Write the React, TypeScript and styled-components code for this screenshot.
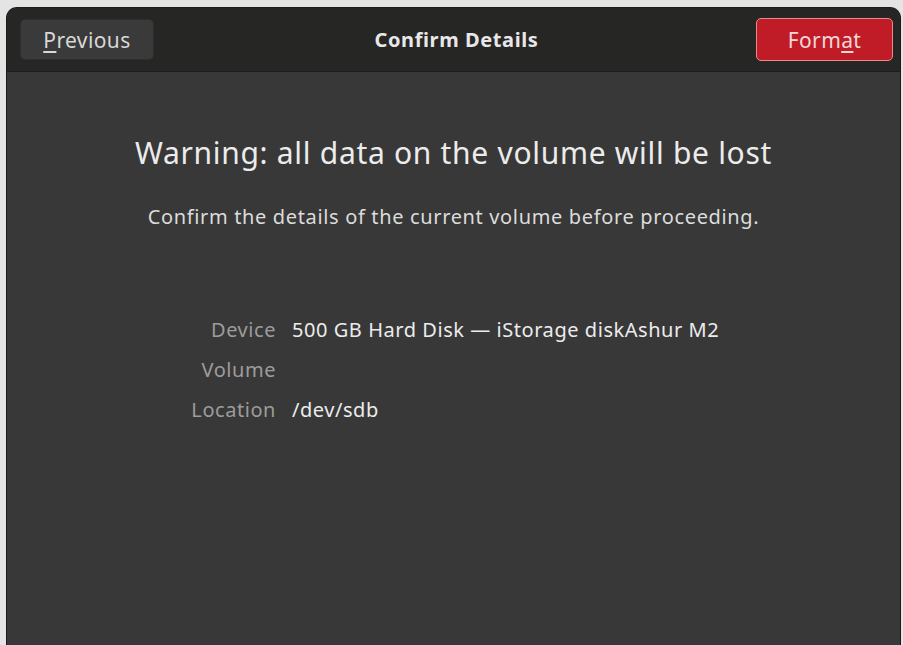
import React from 'react';
import styled, { createGlobalStyle } from 'styled-components';

const GlobalStyle = createGlobalStyle`
  html, body {
    margin: 0;
    padding: 0;
    background: #e4e4e4;
    height: 100%;
    overflow: hidden;
  }
  #root {
    height: 100%;
  }
`;

const Page = styled.div`
  height: 100%;
  padding: 8px 3px 0 7px;
  box-sizing: border-box;
  display: flex;
`;

const Window = styled.div`
  flex: 1;
  display: flex;
  flex-direction: column;
  background: #383838;
  border-radius: 10px 10px 0 0;
  overflow: hidden;
  box-shadow: 0 0 0 1px #1c1c1c;
  font-family: "Noto Sans", "Open Sans", sans-serif;
`;

const HeaderBar = styled.header`
  height: 63px;
  flex: none;
  background: #262625;
  border-bottom: 1px solid #1e1e1e;
  display: grid;
  grid-template-columns: 1fr auto 1fr;
  align-items: center;
  padding: 0 7px 0 13px;
`;

const Button = styled.button<{ $danger?: boolean }>`
  height: ${p => (p.$danger ? 43 : 41)}px;
  padding: 0 ${p => (p.$danger ? 24 : 22)}px;
  border-radius: 5px;
  border: ${p => (p.$danger ? '1.5px solid #e88a90' : '1px solid #2e2e2e')};
  background: ${p => (p.$danger ? '#c01c28' : '#3a3a3a')};
  color: ${p => (p.$danger ? '#f6d6d8' : '#d8d8d8')};
  font-family: inherit;
  font-size: 21px;
  letter-spacing: 0.4px;
  cursor: pointer;
  justify-self: ${p => (p.$danger ? 'end' : 'start')};
  min-width: ${p => (p.$danger ? 137 : 134)}px;
  text-align: center;
`;

const Mnemonic = styled.span`
  text-decoration: underline;
  text-underline-offset: 3px;
`;

const Title = styled.h1`
  margin: 0;
  font-size: 20px;
  font-weight: 700;
  color: #e8e8e8;
  letter-spacing: 0.6px;
`;

const Body = styled.main`
  flex: 1;
  display: flex;
  flex-direction: column;
  align-items: center;
  padding-top: 60px;
`;

const Heading = styled.h2`
  margin: 0;
  font-size: 30px;
  line-height: 41px;
  font-weight: 400;
  color: #ececec;
  letter-spacing: 0.7px;
`;

const Subtitle = styled.p`
  margin: 30px 0 0;
  font-size: 20px;
  line-height: 27px;
  color: #dcdcdc;
  letter-spacing: 0.65px;
`;

const Details = styled.dl`
  margin: 86px 0 0 169px;
  display: grid;
  grid-template-columns: 100px auto;
  column-gap: 16px;
  row-gap: 12px;
  align-self: flex-start;
  font-size: 20px;
  letter-spacing: 0.55px;
`;

const Label = styled.dt`
  color: #9c9c9c;
  text-align: right;
  line-height: 28px;
  white-space: nowrap;
`;

const Value = styled.dd`
  margin: 0;
  color: #ececec;
  line-height: 28px;
  min-height: 28px;
`;

const rows: [string, string][] = [
  ['Device', '500 GB Hard Disk — iStorage diskAshur M2'],
  ['Volume', ''],
  ['Location', '/dev/sdb'],
];

export default function App() {
  return (
    <>
      <GlobalStyle />
      <Page>
        <Window>
          <HeaderBar>
            <Button>
              <Mnemonic>P</Mnemonic>revious
            </Button>
            <Title>Confirm Details</Title>
            <Button $danger>
              Form<Mnemonic>a</Mnemonic>t
            </Button>
          </HeaderBar>
          <Body>
            <Heading>Warning: all data on the volume will be lost</Heading>
            <Subtitle>Confirm the details of the current volume before proceeding.</Subtitle>
            <Details>
              {rows.map(([label, value]) => (
                <React.Fragment key={label}>
                  <Label>{label}</Label>
                  <Value>{value}</Value>
                </React.Fragment>
              ))}
            </Details>
          </Body>
        </Window>
      </Page>
    </>
  );
}
